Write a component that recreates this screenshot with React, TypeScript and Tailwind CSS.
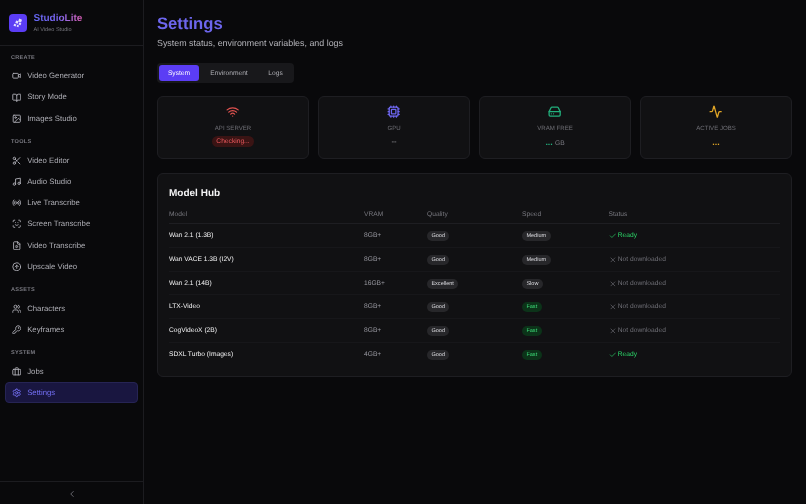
import {
  Activity,
  BookOpen,
  Briefcase,
  Check,
  ChevronLeft,
  CircleArrowUp,
  Cpu,
  FileVideo,
  HardDrive,
  Image,
  KeyRound,
  Music,
  Radio,
  ScanFace,
  Scissors,
  Settings,
  Users,
  Video,
  Wifi,
  X,
} from "lucide-react";

const nav = [
  {
    title: "CREATE",
    items: [
      { name: "Video Generator", icon: Video },
      { name: "Story Mode", icon: BookOpen },
      { name: "Images Studio", icon: Image },
    ],
  },
  {
    title: "TOOLS",
    items: [
      { name: "Video Editor", icon: Scissors },
      { name: "Audio Studio", icon: Music },
      { name: "Live Transcribe", icon: Radio },
      { name: "Screen Transcribe", icon: ScanFace },
      { name: "Video Transcribe", icon: FileVideo },
      { name: "Upscale Video", icon: CircleArrowUp },
    ],
  },
  {
    title: "ASSETS",
    items: [
      { name: "Characters", icon: Users },
      { name: "Keyframes", icon: KeyRound },
    ],
  },
  {
    title: "SYSTEM",
    items: [
      { name: "Jobs", icon: Briefcase },
      { name: "Settings", icon: Settings, active: true },
    ],
  },
];

const models = [
  { name: "Wan 2.1 (1.3B)", vram: "8GB+", quality: "Good", speed: "Medium", ready: true },
  { name: "Wan VACE 1.3B (I2V)", vram: "8GB+", quality: "Good", speed: "Medium", ready: false },
  { name: "Wan 2.1 (14B)", vram: "16GB+", quality: "Excellent", speed: "Slow", ready: false },
  { name: "LTX-Video", vram: "8GB+", quality: "Good", speed: "Fast", ready: false },
  { name: "CogVideoX (2B)", vram: "8GB+", quality: "Good", speed: "Fast", ready: false },
  { name: "SDXL Turbo (Images)", vram: "4GB+", quality: "Good", speed: "Fast", ready: true },
];

function Pill({ label }: { label: string }) {
  const fast = label === "Fast";
  return (
    <span
      className={`mt-[1.5px] flex w-fit rounded-full px-[4.4px] py-[2px] text-[5.55px] leading-[6px] ${
        fast ? "bg-[#0c3319] text-[#3ddc78]" : "bg-[#27272a] text-[#dcdce0]"
      }`}
    >
      {label}
    </span>
  );
}

function Sidebar() {
  return (
    <aside className="flex h-full w-[144px] shrink-0 flex-col border-r border-[#1c1c20] bg-[#09090b]">
      <div className="flex h-[46px] items-center gap-[6.5px] border-b border-[#1c1c20] pl-[9px]">
        <div className="flex size-[18px] items-center justify-center rounded-[4px] bg-[#5b3df5]">
          <svg viewBox="0 0 18 18" className="size-[18px]" fill="#e4dfff">
            <rect x="9.6" y="5" width="3" height="3" transform="rotate(20 11 6.5)" />
            <rect x="6.6" y="6.8" width="2.6" height="2.6" transform="rotate(20 7.9 8.1)" />
            <rect x="9.8" y="8.8" width="2.2" height="2.2" transform="rotate(20 10.9 9.9)" />
            <rect x="4.8" y="10" width="2.2" height="2.2" transform="rotate(20 5.9 11.1)" />
            <rect x="7.8" y="11" width="1.9" height="1.9" transform="rotate(20 8.7 12)" />
          </svg>
        </div>
        <div className="pt-[1px]">
          <div className="bg-gradient-to-r from-[#6366f1] via-[#7a64f0] to-[#dc5fb8] bg-clip-text text-[10px] leading-[13px] font-bold text-transparent">
            StudioLite
          </div>
          <div className="mt-[1.5px] text-[5.55px] leading-[8px] text-[#77777e]">AI Video Studio</div>
        </div>
      </div>
      <nav className="flex-1 pt-[6px] pr-[5.5px] pl-[4.5px]">
        {nav.map((group) => (
          <div key={group.title} className="mb-[7.2px]">
            <div className="pt-[2px] pb-[3.4px] pl-[6.5px] text-[5.55px] leading-[8px] font-semibold tracking-[0.28px] text-[#7c7c84]">
              {group.title}
            </div>
            {group.items.map((item) => {
              const Icon = item.icon;
              return (
                <div
                  key={item.name}
                  className={`flex h-[21.25px] items-center gap-[6px] rounded-[4px] border pl-[6.2px] text-[7.77px] ${
                    item.active
                      ? "border-[#262454] bg-[#191640] text-[#7470f5]"
                      : "border-transparent text-[#aeaeb5]"
                  }`}
                >
                  <Icon className="size-[9.5px] shrink-0" strokeWidth={2.3} />
                  {item.name}
                </div>
              );
            })}
          </div>
        ))}
      </nav>
      <div className="flex h-[23px] items-center justify-center border-t border-[#1c1c20] pt-[1px] text-[#77777e]">
        <ChevronLeft className="size-[10px]" />
      </div>
    </aside>
  );
}

function StatCard({
  label,
  icon,
  children,
}: {
  label: string;
  icon: React.ReactNode;
  children: React.ReactNode;
}) {
  return (
    <div className="flex h-[63px] flex-col items-center rounded-[6px] border border-[#1e1e22] bg-[#111113] pt-[7.5px]">
      {icon}
      <div className="mt-[6px] text-[6.1px] leading-[9px] text-[#6f6f76]">{label}</div>
      <div className="mt-[3.5px] flex h-[12px] items-baseline">{children}</div>
    </div>
  );
}

function SettingsPage() {
  return (
    <main className="flex-1 bg-[#09090b] pt-[12.5px] pr-[14px] pl-[13px]">
      <h1 className="text-[16.65px] leading-[22px] font-bold text-[#6d66ee]">Settings</h1>
      <p className="mt-[2px] text-[8.9px] leading-[12px] text-[#b4b4ba]">
        System status, environment variables, and logs
      </p>

      <div className="mt-[14.5px] flex h-[20px] w-[137px] items-center gap-[4px] rounded-[4px] bg-[#18181b] px-[2px]">
        <div className="flex h-[16px] w-[40px] items-center justify-center rounded-[3px] bg-[#5b3df5] pt-[1px] text-[6.66px] text-white">
          System
        </div>
        <div className="flex h-[16px] w-[52px] items-center justify-center pt-[1px] text-[6.66px] text-[#b0b0b6]">
          Environment
        </div>
        <div className="flex h-[16px] w-[33px] items-center justify-center pt-[1px] text-[6.66px] text-[#b0b0b6]">
          Logs
        </div>
      </div>

      <div className="mt-[13px] grid grid-cols-4 gap-[9px]">
        <StatCard label="API SERVER" icon={<Wifi className="size-[13.3px] text-[#e0524f]" strokeWidth={2.3} />}>
          <span className="rounded-full bg-[#3a1414] px-[4px] text-[6.66px] leading-[11px] text-[#f05a5f]">
            Checking...
          </span>
        </StatCard>
        <StatCard label="GPU" icon={<Cpu className="size-[13.3px] text-[#6d66ee]" strokeWidth={2.3} />}>
          <span className="text-[7.77px] text-[#a0a0a6]">--</span>
        </StatCard>
        <StatCard label="VRAM FREE" icon={<HardDrive className="size-[13.3px] text-[#22b07d]" strokeWidth={2.3} />}>
          <span className="text-[8.88px] font-bold text-[#22b07d]">...</span>
          <span className="ml-[2.2px] text-[6.66px] text-[#7c7c84]">GB</span>
        </StatCard>
        <StatCard label="ACTIVE JOBS" icon={<Activity className="size-[13.3px] text-[#e0a526]" strokeWidth={2.3} />}>
          <span className="text-[8.88px] font-bold text-[#e0a526]">...</span>
        </StatCard>
      </div>

      <section className="mt-[14px] rounded-[6px] border border-[#1e1e22] bg-[#111113] px-[11px] pt-[12.5px] pb-[9.7px]">
        <h2 className="text-[10px] leading-[14px] font-bold text-[#f4f4f5]">Model Hub</h2>
        <table className="mt-[5.3px] w-full table-fixed border-collapse text-left">
          <thead>
            <tr className="h-[18px] border-b border-[#1e1e22] text-[6.66px] text-[#77777e]">
              <th className="w-[195px] font-normal">Model</th>
              <th className="w-[63px] font-normal">VRAM</th>
              <th className="w-[95px] font-normal">Quality</th>
              <th className="w-[86.5px] font-normal">Speed</th>
              <th className="font-normal">Status</th>
            </tr>
          </thead>
          <tbody>
            {models.map((m) => (
              <tr key={m.name} className="h-[23.7px] border-b border-[#17171a] last:border-0">
                <td className="pt-[1.5px] text-[6.66px] leading-[10px] text-[#f4f4f5]">{m.name}</td>
                <td className="pt-[1.5px] text-[6.66px] leading-[10px] text-[#9a9aa2]">{m.vram}</td>
                <td>
                  <Pill label={m.quality} />
                </td>
                <td>
                  <Pill label={m.speed} />
                </td>
                <td className="pt-[1px]">
                  {m.ready ? (
                    <span className="flex items-center gap-[1.5px] text-[6.66px] leading-[10px] text-[#2cd86a]">
                      <Check className="size-[7.77px]" />
                      Ready
                    </span>
                  ) : (
                    <span className="flex items-center gap-[1.5px] text-[6.66px] leading-[10px] text-[#6f6f76]">
                      <X className="size-[7.77px]" />
                      Not downloaded
                    </span>
                  )}
                </td>
              </tr>
            ))}
          </tbody>
        </table>
      </section>
    </main>
  );
}

export default function App() {
  return (
    <div className="flex h-[504px] w-[806px] overflow-hidden bg-[#09090b] font-['Liberation_Sans',Arial,sans-serif] blur-[0.25px] [text-rendering:geometricPrecision]">
      <Sidebar />
      <SettingsPage />
    </div>
  );
}
